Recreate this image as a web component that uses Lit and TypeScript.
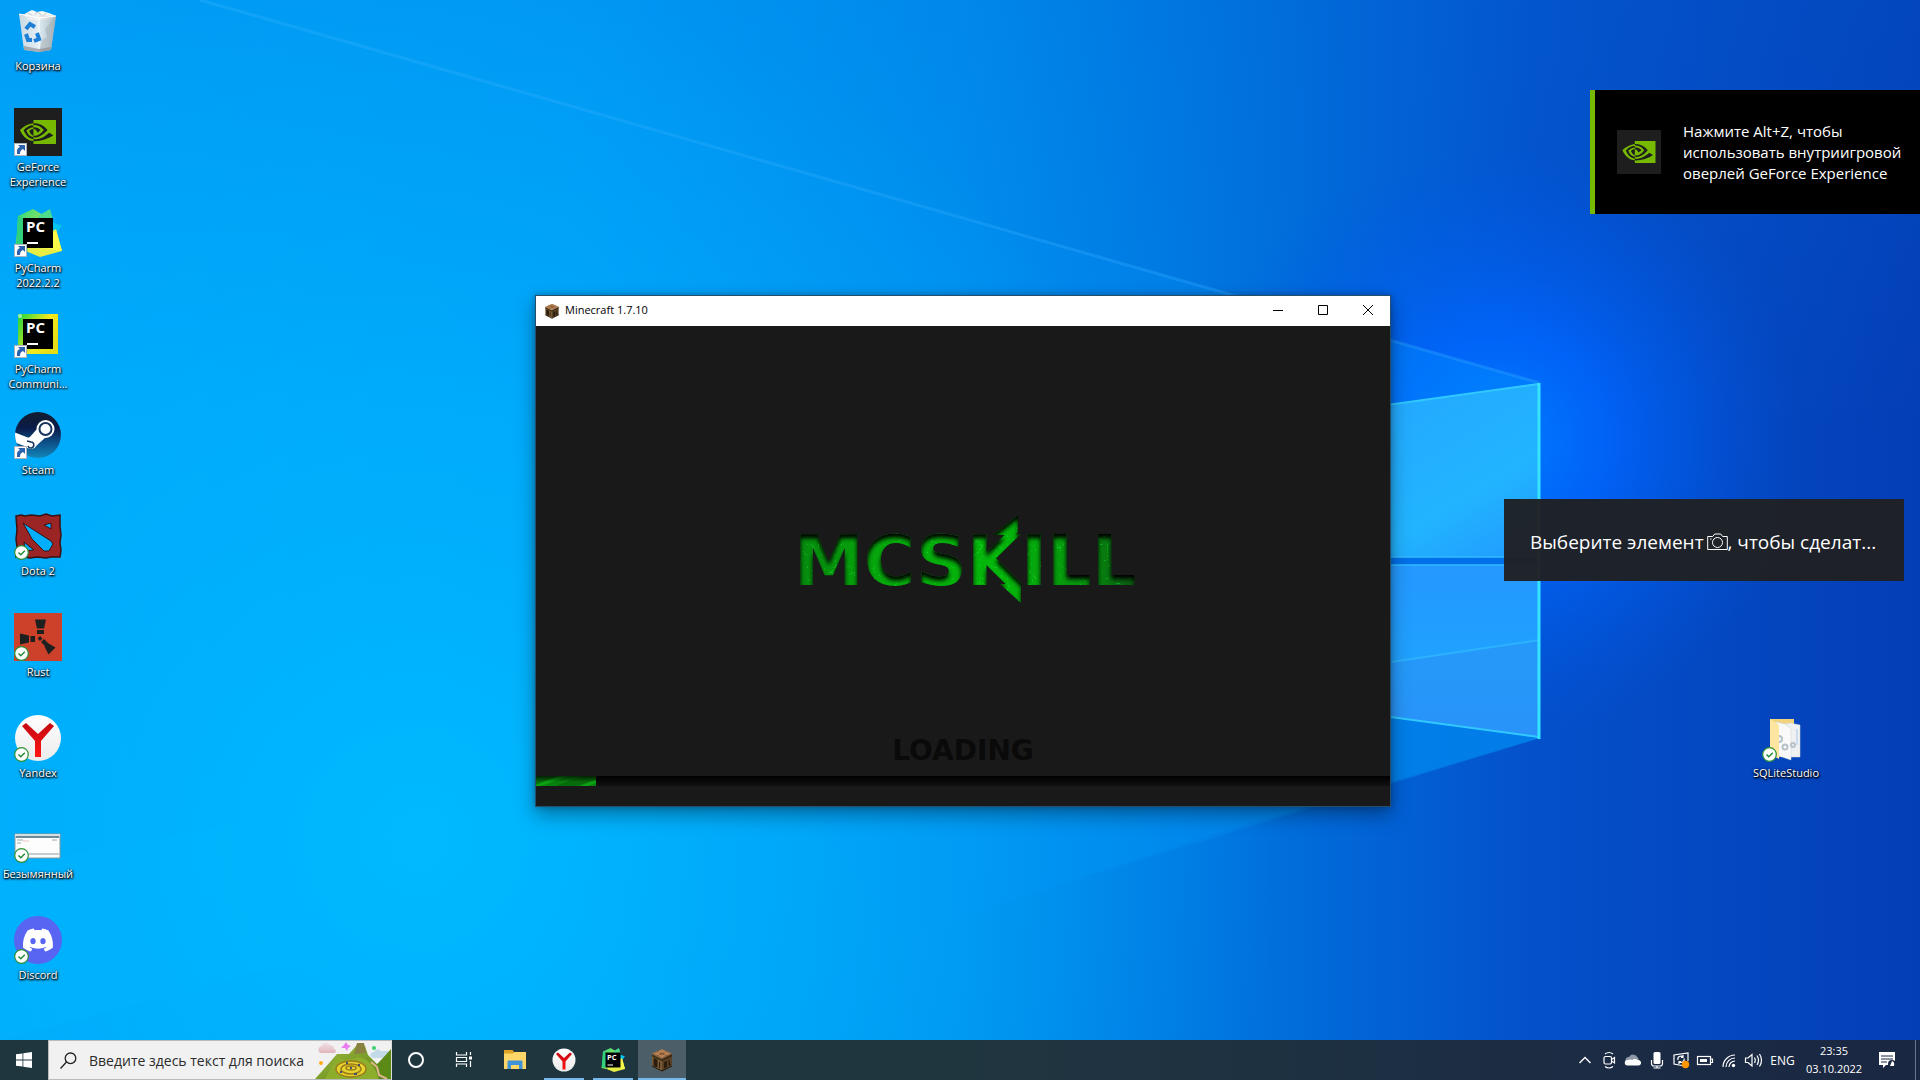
import { LitElement, html, css, svg } from "lit";
import { customElement } from "lit/decorators.js";

const NVIDIA =
  "M8.948 8.798v-1.43a6.7 6.7 0 0 1 .424-.018c3.922-.124 6.493 3.374 6.493 3.374s-2.774 3.851-5.75 3.851c-.398 0-.787-.062-1.158-.185v-4.346c1.528.185 1.837.857 2.747 2.385l2.04-1.714s-1.492-1.952-4-1.952a6.016 6.016 0 0 0-.796.035m0-4.735v2.138l.424-.027c5.45-.185 9.01 4.47 9.01 4.47s-4.08 4.964-8.33 4.964c-.37 0-.733-.035-1.095-.097v1.325c.3.035.61.062.91.062 3.957 0 6.82-2.023 9.593-4.408.459.371 2.34 1.263 2.73 1.652-2.633 2.208-8.772 3.984-12.253 3.984-.335 0-.653-.018-.971-.053v1.864H24V4.063zm0 10.326v1.131c-3.657-.654-4.673-4.46-4.673-4.46s1.758-1.944 4.673-2.262v1.237H8.94c-1.528-.186-2.73 1.245-2.73 1.245s.68 2.412 2.739 3.11M2.456 10.9s2.164-3.197 6.5-3.533V6.201C4.153 6.59 0 10.653 0 10.653s2.35 6.802 8.948 7.42v-1.237c-4.84-.6-6.492-5.936-6.492-5.936z";
const DISCORD =
  "M20.317 4.3698a19.7913 19.7913 0 00-4.8851-1.5152.0741.0741 0 00-.0785.0371c-.211.3753-.4447.8648-.6083 1.2495-1.8447-.2762-3.68-.2762-5.4868 0-.1636-.3933-.4058-.8742-.6177-1.2495a.077.077 0 00-.0785-.037 19.7363 19.7363 0 00-4.8852 1.515.0699.0699 0 00-.0321.0277C.5334 9.0458-.319 13.5799.0992 18.0578a.0824.0824 0 00.0312.0561c2.0528 1.5076 4.0413 2.4228 5.9929 3.0294a.0777.0777 0 00.0842-.0276c.4616-.6304.8731-1.2952 1.226-1.9942a.076.076 0 00-.0416-.1057c-.6528-.2476-1.2743-.5495-1.8722-.8923a.077.077 0 01-.0076-.1277c.1258-.0943.2517-.1923.3718-.2914a.0743.0743 0 01.0776-.0105c3.9278 1.7933 8.18 1.7933 12.0614 0a.0739.0739 0 01.0785.0095c.1202.099.246.1981.3728.2924a.077.077 0 01-.0066.1276 12.2986 12.2986 0 01-1.873.8914.0766.0766 0 00-.0407.1067c.3604.698.7719 1.3628 1.225 1.9932a.076.076 0 00.0842.0286c1.961-.6067 3.9495-1.5219 6.0023-3.0294a.077.077 0 00.0313-.0552c.5004-5.177-.8382-9.6739-3.5485-13.6604a.061.061 0 00-.0312-.0286zM8.02 15.3312c-1.1825 0-2.1569-1.0857-2.1569-2.419 0-1.3332.9555-2.4189 2.157-2.4189 1.2108 0 2.1757 1.0952 2.1568 2.419 0 1.3332-.9555 2.4189-2.1569 2.4189zm7.9748 0c-1.1825 0-2.1569-1.0857-2.1569-2.419 0-1.3332.9554-2.4189 2.1569-2.4189 1.2108 0 2.1757 1.0952 2.1568 2.419 0 1.3332-.946 2.4189-2.1568 2.4189Z";

/* ---- artwork, drawn in a 48 x 48 box ---- */

const nvidia = svg`
  <rect width="48" height="48" fill="#1e1e1e"/>
  <path transform="translate(6 6) scale(1.5)" fill="#76b900" d=${NVIDIA}/>`;

const recycleBin = svg`
  <defs>
    <linearGradient id="bin" x1="0" x2="1">
      <stop offset="0" stop-color="#d9dde0"/><stop offset=".5" stop-color="#f1f3f4"/><stop offset="1" stop-color="#b9bec2"/>
    </linearGradient>
  </defs>
  <path d="M9 8l5-3 4-2 5 2 5-1 7 2 7 3-8 4H14z" fill="#f7f8f8"/>
  <path d="M14 6l6 3 3-4 6 4 4-4" fill="none" stroke="#bcc5cb" stroke-width="1"/>
  <path d="M5 7l37 2-5 34-12 2-15-2z" fill="url(#bin)" opacity=".93"/>
  <path d="M5 7l20 4 17-2M25 11v34" fill="none" stroke="#fff" stroke-width="1"/>
  <path d="M42 9l-5 34-12 2 3-12 5-3-2-8z" fill="#9ba3a8" opacity=".4"/>
  <path d="M10 39l15 3 12-2v3l-12 2-15-2z" fill="#8f9295" opacity=".7"/>
  <g fill="none" stroke="#1d7fd6" stroke-width="4">
    <path d="M12 22l4-5 5 3"/><path d="M12 27l2 6 4 0"/><path d="M20 34l5-2-2-6"/>
  </g>`;

const pycharmTile = svg`
  <rect x="9" y="9" width="30" height="30" fill="#000"/>
  <text x="12" y="23" font-family="Open Sans, sans-serif" font-size="15" font-weight="700" fill="#fff">PC</text>
  <rect x="13" y="33" width="11" height="2" fill="#fff"/>`;

const pycharm = svg`
  <defs>
    <linearGradient id="pc1" x1="0" y1="0" x2="1" y2="1">
      <stop offset="0" stop-color="#21d789"/><stop offset=".6" stop-color="#8be35c"/><stop offset="1" stop-color="#fcf84a"/>
    </linearGradient>
  </defs>
  <path d="M4 7L19 0l10 6L20 44 1 40 3 24z" fill="url(#pc1)"/>
  <path d="M4 7l12 5-8 28-6-2z" fill="#2fd17c"/>
  <path d="M24 7L36 0l3 11-8 10z" fill="#4cdc8b"/>
  <path d="M36 12l12 5-10 12z" fill="#07c3f2"/>
  <path d="M14 36l28-16 6 22-22 6-12-5z" fill="#e6ee45"/>
  <path d="M42 21l6 21-20-3z" fill="#fcf84a"/>
  ${pycharmTile}`;

const pycharmCommunity = svg`
  <defs>
    <linearGradient id="pcc" x1="0" y1="0" x2="1" y2="0.5">
      <stop offset="0" stop-color="#17d53c"/><stop offset=".35" stop-color="#8fe02f"/><stop offset=".65" stop-color="#f5ea1e"/><stop offset="1" stop-color="#e8dc16"/>
    </linearGradient>
  </defs>
  <rect x="4" y="4" width="40" height="40" fill="url(#pcc)"/>
  <circle cx="6" cy="6" r="2" fill="#d6fbe6" opacity=".7"/>
  ${pycharmTile}`;

const steam = svg`
  <defs>
    <linearGradient id="st" x1="0" y1="0" x2="0" y2="1">
      <stop offset="0" stop-color="#111d2e"/><stop offset=".35" stop-color="#0a1b48"/><stop offset=".7" stop-color="#0d568e"/><stop offset="1" stop-color="#1387b8"/>
    </linearGradient>
    <clipPath id="stc"><circle cx="24" cy="24" r="23"/></clipPath>
  </defs>
  <circle cx="24" cy="24" r="23" fill="url(#st)"/>
  <g clip-path="url(#stc)">
    <path d="M0 21l15 6 8-9 9 8-10 9-6 2L0 31z" fill="#fff"/>
    <circle cx="31.500" cy="18" r="9" fill="#fff"/>
    <circle cx="31.500" cy="18" r="6" fill="none" stroke="#17325c" stroke-width="2"/>
    <circle cx="17" cy="32" r="6" fill="#fff"/>
    <path d="M13 30l4 1a3 3 0 1 1-3 4" fill="none" stroke="#17325c" stroke-width="1.500"/>
  </g>`;

const dota = svg`
  <path d="M2 4l5-1 4 1 6-1 9 1 6-2 6 2 8-1v11l1 9-1 8 1 7-1 7-9 0-5 1-9-1-7 1-6-1-8 0 1-10-1-8 1-9z" fill="#9b2424" stroke="#3a1010" stroke-width="1.500"/>
  <path d="M9 11l28 18 2 3-4 7-5 0-12-12z" fill="#00b0ff" stroke="#3a1010" stroke-width="1"/>
  <path d="M30 13l7-2v6zM10 30l10 8-9 1z" fill="#00b0ff" stroke="#3a1010" stroke-width="1"/>`;

const rust = svg`
  <rect width="48" height="48" fill="#cd412b"/>
  <g fill="#1e2020">
    <path d="M21 6.500h11l-2 9h-7zM23 17h7v4h-7z"/>
    <path d="M6 20.500l9 2v7l-9 2zM16.500 23H21v6h-4.500z"/>
    <path d="M33 29.500l8.500 5-7 7-4-8zM27 29l3-3 4 4-3 3z"/>
    <path d="M26 23l2.500 2.500L26 28l-2.500-2.500z"/>
  </g>`;

const yandex = svg`
  <defs>
    <linearGradient id="ya" x1="0" y1="0" x2="0" y2="1"><stop offset="0" stop-color="#fff"/><stop offset="1" stop-color="#ebebeb"/></linearGradient>
    <linearGradient id="yr" x1="0" y1="0" x2="0" y2="1"><stop offset="0" stop-color="#c40a12"/><stop offset="1" stop-color="#ff1414"/></linearGradient>
  </defs>
  <circle cx="24" cy="24" r="23" fill="url(#ya)"/>
  <path d="M8 12l4-3 12 11L36 9l4 3-13 15v16h-6V27z" fill="url(#yr)"/>`;

const screenshotFile = svg`
  <rect x="1" y="19" width="45" height="24" fill="#fdfdfd" stroke="#87979e" stroke-width="1"/>
  <rect x="1" y="19" width="45" height="2" fill="#d8dfe2"/>
  <rect x="2" y="21" width="43" height="2" fill="#6d8c99"/>
  <path d="M3 25h6M3 28h4M38 25h5" stroke="#99a8b0"/>
  <path d="M9 26h6" stroke="#eec4c4"/>
  <rect x="15" y="38" width="30" height="2" fill="#c3ccd0"/>`;

const discord = svg`
  <circle cx="24" cy="24" r="24" fill="#5865f2"/>
  <path transform="translate(9 9) scale(1.25)" fill="#fff" d=${DISCORD}/>`;

const folder = svg`
  <path d="M8 5h24v38H8z" fill="#f3d47e"/>
  <path d="M19 11l9-2 10 2v32l-14 0z" fill="#eef0f1" stroke="#d3d7da" stroke-width=".5"/>
  <path d="M14 8l9 2 6 5v31l-12-4z" fill="#fafafa" stroke="#cfd3d6" stroke-width=".5"/>
  <path d="M8 5l9 6v34l-9-5z" fill="#ffe6a0"/>
  <g fill="none" stroke="#b6c1ca" stroke-width="2">
    <path d="M17 22a3 3 0 0 1 0 6"/><circle cx="23" cy="33" r="2.500"/><circle cx="31" cy="31" r="2"/>
  </g>
  <path d="M35 15v16" stroke="#a9c8ee"/>`;

const craftingTable = svg`
  <path d="M24 2l20 9-20 10L4 11z" fill="#a9764c"/>
  <path d="M4 11l20 10v25L4 36z" fill="#7a5a35"/>
  <path d="M44 11L24 21v25l20-10z" fill="#5b4226"/>
  <path d="M14 7l20 9M34 7l-20 9" stroke="#7d4f2c" stroke-width="2"/>
  <path d="M24 6l11 5-11 6-11-6z" fill="none" stroke="#c48d5e" stroke-width="2"/>
  <path d="M4 15l20 10 20-10" fill="none" stroke="#3d2a14" stroke-width="3"/>
  <path d="M8 21v14l6 3V24zM19 28v12M29 28v12l4-2V26M38 23v12l3-2" fill="#2a1c0e" stroke="#2a1c0e" stroke-width="2"/>
  <path d="M4 36l20 10 20-10" fill="none" stroke="#20150a" stroke-width="2"/>`;

const explorer = svg`
  <path d="M2 4h17l3 4h24v34H2z" fill="#e0a526"/>
  <path d="M2 11h18l4-3h22v34H2z" fill="#ffd768"/>
  <path d="M9 42V27q0-2 2-2h26q2 0 2 2v15h-7v-8H16v8z" fill="#3f93d6"/>
  <path d="M16 34h16v8H16z" fill="#ffd768"/>`;

const shortcutBadge = svg`
  <rect x=".5" y="35.500" width="12" height="12" fill="#fff" stroke="#a8b3bd" stroke-width="1"/>
  <path d="M3 46c0-4 0-6 3-7l-2-2h7v6l-2-2c-2 1-3 2-3 5z" fill="#2b62ae"/>`;

const syncBadge = svg`
  <circle cx="7.500" cy="40.500" r="6.800" fill="#fff" stroke="#2c9137" stroke-width="1.200"/>
  <path d="M4.500 40.500l2.300 2.300 4-4" fill="none" stroke="#1f8a34" stroke-width="1.400"/>`;

type Item = { label: string; art: unknown; badge?: unknown };
const desktopItems: Item[] = [
  { label: "Корзина", art: recycleBin },
  { label: "GeForce Experience", art: nvidia, badge: shortcutBadge },
  { label: "PyCharm 2022.2.2", art: pycharm, badge: shortcutBadge },
  { label: "PyCharm Communi...", art: pycharmCommunity, badge: shortcutBadge },
  { label: "Steam", art: steam, badge: shortcutBadge },
  { label: "Dota 2", art: dota, badge: syncBadge },
  { label: "Rust", art: rust, badge: syncBadge },
  { label: "Yandex", art: yandex, badge: syncBadge },
  { label: "Безымянный", art: screenshotFile, badge: syncBadge },
  { label: "Discord", art: discord, badge: syncBadge },
];

const taskApps = [
  { label: "Проводник", art: explorer, state: "" },
  { label: "Yandex", art: yandex, state: "running" },
  { label: "PyCharm", art: pycharm, state: "running" },
  { label: "Minecraft 1.7.10", art: craftingTable, state: "active" },
];

/* Tray glyphs, 20 x 20 */
const tray = [
  { label: "Скрытые значки", art: svg`<path d="M4.500 13L10 7.500l5.500 5.500" stroke-width="1.400"/>` },
  {
    label: "Начать собрание",
    art: svg`<rect x="5" y="6.500" width="7.500" height="7.500" rx="1.500"/><path d="M12.500 9.500l3-2v5.500l-3-2M6 4q4-3 8 0M6 16.500q4 3 8 0"/>`,
  },
  {
    label: "OneDrive",
    art: svg`<path d="M5 13a3 3 0 0 1 1-6 5 5 0 0 1 9 1l2 4z" fill="#8d97a5" stroke="none"/><path d="M4.500 15.500a2.500 2.500 0 0 1 0-5.500q3-1 5 0 2-2.500 5 0 4 0 3.500 3.500-.5 2-2.500 2z" fill="#fff" stroke="none"/>`,
  },
  {
    label: "Микрофон",
    art: svg`<rect x="6.500" y="2" width="7" height="12" rx="1.500" fill="#fff" stroke="none"/><path d="M4.500 10v3.500q0 2.500 2.500 2.500h6q2.500 0 2.500-2.500V10M10 16v2.500M6.500 18h7"/>`,
  },
  {
    label: "Обновление",
    art: svg`<path d="M11 15.500L3 14V5l14-2v8" /><path d="M7 10a3 3 0 0 1 5-3M13 8.500a3 3 0 0 1-5 3M12 5v2.500h-2M8 14v-2.500h2"/><circle cx="14.500" cy="14.500" r="3.700" fill="#ff9500" stroke="none"/>`,
  },
  {
    label: "Батарея",
    art: svg`<rect x="2.500" y="6.500" width="13" height="8"/><path d="M15.500 9h2v3.500h-2"/><rect x="5" y="9" width="7" height="3" fill="#fff" stroke="none"/>`,
  },
  {
    label: "Сеть",
    art: svg`<path d="M4 17A12 12 0 0 1 16 5M7 17a9 9 0 0 1 9-9M10 17a6 6 0 0 1 6-6"/><circle cx="14.500" cy="15.500" r="1.700" fill="#fff" stroke="none"/>`,
  },
  {
    label: "Громкость",
    art: svg`<path d="M2.500 8v4.500H5l4 3.500V4.500L5 8z"/><path d="M11.500 7.500q1.500 2.700 0 5.500M14 5.500q3 4.700 0 9.500M16.500 4q4 6.200 0 12.500"/>`,
  },
];

const wallpaper = html`
  <svg class="wallpaper" viewBox="0 0 1920 1080" preserveAspectRatio="none" aria-hidden="true">
    <defs>
      <linearGradient id="base" x1="0" y1="0" x2="1" y2="0">
        <stop offset="0" stop-color="#00abfc"/><stop offset=".3" stop-color="#00a4fa"/>
        <stop offset=".5" stop-color="#0090ee"/><stop offset=".65" stop-color="#0072de"/>
        <stop offset=".8" stop-color="#0450cb"/><stop offset="1" stop-color="#043eb6"/>
      </linearGradient>
      <linearGradient id="top" x1="0" y1="0" x2="0" y2="1">
        <stop offset="0" stop-color="#0068d8" stop-opacity=".2"/><stop offset=".4" stop-color="#0070e0" stop-opacity="0"/>
      </linearGradient>
      <radialGradient id="cyan" cx="420" cy="840" r="860" gradientUnits="userSpaceOnUse">
        <stop offset="0" stop-color="#00bcff" stop-opacity=".9"/><stop offset=".5" stop-color="#00b2fc" stop-opacity=".5"/>
        <stop offset="1" stop-color="#00a8f4" stop-opacity="0"/>
      </radialGradient>
      <radialGradient id="glow" cx="1500" cy="440" r="300" gradientUnits="userSpaceOnUse">
        <stop offset="0" stop-color="#007cff"/><stop offset=".35" stop-color="#0066ff" stop-opacity=".85"/>
        <stop offset="1" stop-color="#0056e0" stop-opacity="0"/>
      </radialGradient>
      <linearGradient id="beam" x1="200" y1="0" x2="1540" y2="0" gradientUnits="userSpaceOnUse">
        <stop offset="0" stop-color="#00a0ff" stop-opacity="0"/><stop offset=".6" stop-color="#0098ff" stop-opacity=".35"/>
        <stop offset="1" stop-color="#0098ff" stop-opacity=".9"/>
      </linearGradient>
      <linearGradient id="edge" x1="200" y1="0" x2="1540" y2="0" gradientUnits="userSpaceOnUse">
        <stop offset="0" stop-color="#35b5ff" stop-opacity=".3"/><stop offset="1" stop-color="#2ba0ff" stop-opacity=".4"/>
      </linearGradient>
      <linearGradient id="low" x1="900" y1="0" x2="1540" y2="0" gradientUnits="userSpaceOnUse">
        <stop offset="0" stop-color="#00a0f6" stop-opacity="0"/><stop offset="1" stop-color="#0088f0" stop-opacity=".6"/>
      </linearGradient>
      <linearGradient id="pane" x1="0" y1="0" x2="1" y2="1">
        <stop offset="0" stop-color="#24a2ff"/><stop offset=".7" stop-color="#22b4ff"/><stop offset="1" stop-color="#2099ff"/>
      </linearGradient>
      <linearGradient id="pane2" x1="0" y1="0" x2="0" y2="1">
        <stop offset="0" stop-color="#2498ff"/><stop offset=".6" stop-color="#1fa2ff"/><stop offset="1" stop-color="#2896ff"/>
      </linearGradient>
    </defs>
    <rect width="1920" height="1080" fill="url(#base)"/>
    <rect width="1920" height="1080" fill="url(#top)"/>
    <rect width="1920" height="1080" fill="url(#cyan)"/>
    <rect width="1920" height="1080" fill="url(#glow)"/>
    <path d="M200 0L1540 383V738L1200 838 900 938 600 500z" fill="url(#beam)" opacity=".4"/>
    <path d="M1540 738L1180 848 900 934 900 560z" fill="url(#low)"/>
    <path d="M200 0L1540 383" stroke="url(#edge)" stroke-width="3"/>
    <path d="M0 868L535 768 535 900 0 1040z" fill="#00b8ff" opacity=".2"/>
    <path d="M1250 424L1540 383V557H1250z" fill="url(#pane)"/>
    <path d="M1250 565H1540V738L1250 698z" fill="url(#pane2)"/>
    <path d="M1250 683L1540 640V738L1250 698z" fill="#2c8ff2" opacity=".45"/>
    <path d="M1250 683L1540 640M1250 557H1540M1250 565H1540" stroke="#2fb8ff" stroke-width="2" opacity=".8"/>
    <rect x="1250" y="558" width="290" height="6" fill="#0070ea"/>
    <path d="M1250 424L1539 384M1250 698L1539 737" stroke="#30c8ff" stroke-width="2" fill="none"/>
    <path d="M1539 383V739" stroke="#36e4ff" stroke-width="3"/>
  </svg>
`;

@customElement("app-root")
export class AppRoot extends LitElement {
  static styles = css`
    :host {
      display: block;
      font-family: "Open Sans", "Noto Sans", sans-serif;
      color: #fff;
    }
    button {
      border: 0;
      padding: 0;
      background: none;
      color: inherit;
      font: inherit;
    }
    .screen {
      position: relative;
      display: flex;
      flex-direction: column;
      min-height: 100vh;
      overflow: hidden;
      background: #0078d7;
    }
    .wallpaper {
      position: absolute;
      inset: 0;
      width: 100%;
      height: 100%;
    }
    .desktop {
      position: relative;
      flex: 1;
    }
    .icons {
      display: flex;
      flex-direction: column;
      align-items: flex-start;
      list-style: none;
      margin: 0;
      padding: 7px 0 0;
    }
    .icons li {
      height: 101px;
    }
    .item {
      display: flex;
      flex-direction: column;
      align-items: center;
      gap: 3px;
      width: 76px;
      font-size: 11px;
      line-height: 15px;
      text-shadow: 1px 1px 2px #000, 0 1px 2px #000, 0 0 3px rgba(0, 0, 0, 0.6);
    }
    .item svg {
      width: 48px;
      height: 48px;
      overflow: visible;
    }
    .loose {
      position: absolute;
      right: 96px;
      top: 714px;
    }

    /* game window */
    .window {
      position: absolute;
      left: 535px;
      top: 295px;
      width: 856px;
      box-sizing: border-box;
      border: 1px solid #24506e;
      background: #191919;
      box-shadow: 0 8px 18px rgba(0, 0, 0, 0.35), 0 0 6px rgba(0, 0, 0, 0.25);
    }
    .titlebar {
      display: flex;
      align-items: center;
      height: 30px;
      padding-left: 8px;
      background: #fff;
      color: #000;
      font-size: 11px;
      line-height: 28px;
    }
    .titlebar svg.app {
      width: 16px;
      height: 16px;
      margin-right: 5px;
    }
    .title {
      flex: 1;
      align-self: flex-start;
      margin: 0;
      font-size: inherit;
      font-weight: 400;
    }
    .winbtn {
      display: grid;
      place-items: center;
      width: 45px;
      height: 28px;
      align-self: flex-start;
    }
    .winbtn svg {
      width: 10px;
      height: 10px;
      fill: none;
      stroke: #000;
    }
    .client {
      display: flex;
      flex-direction: column;
      align-items: center;
      padding: 186px 0 20px;
    }
    .brand {
      width: 344px;
      height: 100px;
      margin-left: 12px;
      overflow: visible;
    }
    .brand text {
      font: 700 70px "DejaVu Sans", sans-serif;
    }
    .loading {
      margin: 121px 0 7px;
      font: 700 28px/36px "DejaVu Sans", sans-serif;
      color: #0a0a0a;
    }
    .progress {
      appearance: none;
      display: block;
      width: 100%;
      height: 10px;
      border: 0;
      background: none;
    }
    .progress::-webkit-progress-bar {
      background: linear-gradient(#000, #111);
    }
    .progress::-webkit-progress-value {
      background: linear-gradient(rgba(0, 0, 0, 0.7), transparent 60%),
        repeating-linear-gradient(160deg, #066c0b 0 7px, #0ca414 9px 10px, #08800e 12px 16px);
    }

    /* notifications */
    .toast-nvidia {
      position: absolute;
      right: 0;
      top: 90px;
      display: flex;
      align-items: center;
      gap: 22px;
      width: 330px;
      height: 124px;
      box-sizing: border-box;
      padding-left: 22px;
      border-left: 5px solid #76b900;
      background: #000;
      font-size: 15px;
      line-height: 21px;
    }
    .toast-nvidia svg {
      flex: none;
      width: 44px;
      height: 44px;
    }
    .toast-nvidia p,
    .toast-shot p {
      margin: 0;
      white-space: nowrap;
    }
    .toast-shot {
      position: absolute;
      right: 16px;
      top: 499px;
      display: flex;
      align-items: center;
      width: 400px;
      height: 82px;
      box-sizing: border-box;
      padding: 4px 26px 0;
      background: rgba(31, 32, 34, 0.96);
      font-size: 19px;
      line-height: 26px;
    }
    .toast-shot svg {
      width: 21px;
      height: 17px;
      margin-left: -2px;
      fill: none;
      stroke: #fff;
      vertical-align: -1px;
    }

    /* taskbar */
    .taskbar {
      position: relative;
      display: flex;
      height: 40px;
      background: linear-gradient(90deg, #20363f, #20363f 50%, #1b2b44 85%, #1a2742);
    }
    .start,
    .taskbtn {
      display: grid;
      place-items: center;
      width: 48px;
      height: 40px;
    }
    .start svg {
      width: 16px;
      height: 16px;
    }
    .search {
      position: relative;
      display: flex;
      align-items: center;
      gap: 12px;
      width: 344px;
      height: 40px;
      box-sizing: border-box;
      padding-left: 11px;
      border: 1px solid #b8bbbd;
      border-right-color: #ddd;
      background: #f1f1f1;
    }
    .search .lens {
      flex: none;
      width: 17px;
      height: 17px;
    }
    .search input {
      flex: 1;
      min-width: 0;
      border: 0;
      padding: 0;
      outline: 0;
      background: none;
      font: 14px "Open Sans", "Noto Sans", sans-serif;
      color: #2b2b2b;
    }
    .search input::placeholder {
      color: #2b2b2b;
      opacity: 1;
    }
    .search .scene {
      flex: none;
      width: 76px;
      height: 38px;
      margin-left: -8px;
    }
    .tools,
    .apps,
    .tray {
      display: flex;
    }
    .taskbtn svg {
      width: 24px;
      height: 24px;
      fill: none;
    }
    .apps {
      gap: 1px;
      margin-left: 3px;
    }
    .apps .taskbtn {
      position: relative;
    }
    .running::after,
    .active::after {
      content: "";
      position: absolute;
      left: 4px;
      right: 4px;
      bottom: 0;
      height: 2px;
      background: #76b9ed;
    }
    .active::after {
      left: 0;
      right: 0;
    }
    .active {
      background: #4c5e68;
    }
    .tray {
      align-items: stretch;
      margin-left: auto;
      font-size: 12px;
    }
    .traybtn {
      display: grid;
      place-items: center;
      width: 24px;
    }
    .traybtn svg {
      width: 20px;
      height: 20px;
      fill: none;
      stroke: #fff;
      stroke-width: 1.200;
    }
    .lang {
      width: 35px;
    }
    .clock {
      display: flex;
      flex-direction: column;
      justify-content: center;
      align-items: center;
      width: 68px;
      font-size: 11px;
      line-height: 18px;
    }
    .notes {
      display: grid;
      place-items: center;
      width: 38px;
    }
    .notes svg {
      width: 18px;
      height: 18px;
    }
    .peek {
      width: 5px;
      margin-left: 9px;
      border-left: 1px solid #69748a;
    }
  `;

  private item(i: Item) {
    return html`<button class="item">
      <svg viewBox="0 0 48 48" aria-hidden="true">${i.art}${i.badge}</svg>
      <span>${i.label}</span>
    </button>`;
  }

  private gameWindow() {
    return html`<section class="window" aria-label="Minecraft 1.7.10">
      <header class="titlebar">
        <svg class="app" viewBox="0 0 48 48" aria-hidden="true">${craftingTable}</svg>
        <h1 class="title">Minecraft 1.7.10</h1>
        <button class="winbtn" aria-label="Свернуть"><svg viewBox="0 0 10 10"><path d="M0 5.500h10"/></svg></button>
        <button class="winbtn" aria-label="Развернуть"><svg viewBox="0 0 10 10"><path d="M.5.5h9v9h-9z"/></svg></button>
        <button class="winbtn" aria-label="Закрыть"><svg viewBox="0 0 10 10"><path d="M0 0l10 10M10 0L0 10"/></svg></button>
      </header>
      <div class="client">
        <svg class="brand" viewBox="0 0 344 100">
          <defs>
            <linearGradient id="mc" gradientUnits="userSpaceOnUse" x1="0" y1="0" x2="340" y2="0">
              <stop offset="0" stop-color="#078a0e"/><stop offset=".25" stop-color="#06a80c"/>
              <stop offset=".6" stop-color="#05b80b"/><stop offset=".85" stop-color="#07900e"/><stop offset="1" stop-color="#0a5512"/>
            </linearGradient>
            <filter id="veins" x="-5%" y="-5%" width="110%" height="110%" color-interpolation-filters="sRGB">
              <feTurbulence type="turbulence" baseFrequency=".09" numOctaves="3" seed="4" result="n"/>
              <feColorMatrix in="n" type="matrix" values="0 0 0 0 .1  0 0 0 0 .9  0 0 0 0 .2  -7 0 0 0 .8" result="v"/>
              <feComposite in="v" in2="SourceAlpha" operator="in" result="lines"/>
              <feOffset in="SourceAlpha" dy="4"/>
              <feGaussianBlur stdDeviation="2" result="o"/>
              <feComposite in="SourceAlpha" in2="o" operator="out" result="shade"/>
              <feMerge><feMergeNode in="SourceGraphic"/><feMergeNode in="lines"/><feMergeNode in="shade"/></feMerge>
            </filter>
          </defs>
          <g filter="url(#veins)" fill="url(#mc)">
            <text x="-3" y="73">MCSKILL</text>
            <path class="blades" d="M196 23L221 3V20L218 23zM203 72H224V91z"/>
          </g>
        </svg>
        <p class="loading">LOADING</p>
        <progress class="progress" max="100" value="7" aria-label="LOADING"></progress>
      </div>
    </section>`;
  }

  private taskbar() {
    return html`<footer class="taskbar">
      <button class="start" aria-label="Пуск">
        <svg viewBox="0 0 16 16" fill="#fff"><path d="M0 2.300L6.500 1.400v6.200H0zM7.300 1.300L16 0v7.600H7.300zM0 8.400h6.500v6.200L0 13.700zM7.300 8.400H16V16l-8.700-1.300z"/></svg>
      </button>
      <label class="search">
        <svg class="lens" viewBox="0 0 17 17" fill="none" stroke="#222" stroke-width="1.300"><circle cx="10.500" cy="6.300" r="5.300"/><path d="M6.500 10L.5 16.500"/></svg>
        <input type="text" aria-label="Поиск" placeholder="Введите здесь текст для поиска" />
        <svg class="scene" viewBox="0 0 76 38" aria-hidden="true">
          <defs>
            <linearGradient id="hill" x1="0" y1="0" x2="1" y2="1"><stop offset="0" stop-color="#a6bd42"/><stop offset="1" stop-color="#4f7d10"/></linearGradient>
            <linearGradient id="cld" x1="0" y1="0" x2="0" y2="1"><stop offset="0" stop-color="#efe3e6"/><stop offset="1" stop-color="#e3b4bd"/></linearGradient>
          </defs>
          <path d="M5 12a4 4 0 0 1 1-7 5 5 0 0 1 9-1 4 4 0 0 1 4 4 2 2 0 0 1 0 4z" fill="url(#cld)"/>
          <path d="M58 17a3 3 0 0 1 1-6 4 4 0 0 1 7-1h10v7z" fill="#c3dbe8"/>
          <path d="M31 1l2 3 3 1-3 2-1 3-2-3-4 0 3-3z" fill="#e97df0"/>
          <circle cx="59" cy="7" r="2" fill="#3fcf74"/><circle cx="6" cy="22" r="2" fill="#ffab1a"/>
          <path d="M0 38l8-9 14-16 12 0 8-9 8 1 3 9 9 9 14-14v31z" fill="url(#hill)"/>
          <path d="M42 2l7 0 2 10-12 1z" fill="#8a8040"/>
          <path d="M76 8l-14 16 8 14h6z" fill="#5b8a16"/>
          <path d="M22 16q14 5 20 0 10 0 18 12l4 10H10z" fill="#8cae2c"/>
          <path d="M56 21l6 5 2 8 8 4" fill="none" stroke="#e0b68e" stroke-width="2"/>
          <g fill="#e5d32e" stroke="#9c7a1a" stroke-width="1.500">
            <ellipse cx="36" cy="28" rx="15" ry="8"/><ellipse cx="36" cy="28" rx="10" ry="5"/><ellipse cx="36" cy="27" rx="5" ry="2"/>
          </g>
          <path d="M25 31h2M39 33h3M43 24h2M31 22h2M35 27h2" stroke="#45506c" stroke-width="2"/>
        </svg>
      </label>
      <nav class="tools">
        <button class="taskbtn" aria-label="Кортана">
          <svg viewBox="0 0 24 24"><circle cx="12" cy="12" r="7" stroke="#fff" stroke-width="2"/></svg>
        </button>
        <button class="taskbtn" aria-label="Представление задач">
          <svg viewBox="0 0 24 24" stroke="#fff" stroke-width="1.200"><path d="M4.500 4v3h10V4M4.500 19v-3h10v3M4.500 9.500h10v4h-10zM18.500 4v3M18.500 13v6"/><path d="M17 8.500h3v3h-3z" fill="#fff" stroke="none"/></svg>
        </button>
      </nav>
      <nav class="apps">
        ${taskApps.map(
          (a) => html`<button class="taskbtn ${a.state}" aria-label=${a.label}><svg viewBox="0 0 48 48">${a.art}</svg></button>`,
        )}
      </nav>
      <div class="tray">
        ${tray.map(
          (t) => html`<button class="traybtn" aria-label=${t.label}><svg viewBox="0 0 20 20">${t.art}</svg></button>`,
        )}
        <button class="lang">ENG</button>
        <button class="clock"><span>23:35</span><span>03.10.2022</span></button>
        <button class="notes" aria-label="Уведомления">
          <svg viewBox="0 0 18 18"><path d="M1 1h16v13h-9l-3 3v-3H1z" fill="#fff"/><path d="M3 5h12M3 8h12M3 11h6" stroke="#1a2742"/><circle cx="14" cy="13" r="4" fill="#1a2742"/><path d="M12 15l2-5q3 1 2 5z" fill="#fff"/></svg>
        </button>
        <button class="peek" aria-label="Свернуть все окна"></button>
      </div>
    </footer>`;
  }

  render() {
    return html`<div class="screen">
      ${wallpaper}
      <main class="desktop">
        <ul class="icons">
          ${desktopItems.map((i) => html`<li>${this.item(i)}</li>`)}
        </ul>
        <div class="loose">${this.item({ label: "SQLiteStudio", art: folder, badge: syncBadge })}</div>
        ${this.gameWindow()}
        <aside class="toast-nvidia">
          <svg viewBox="0 0 48 48" aria-hidden="true">${nvidia}</svg>
          <p>Нажмите Alt+Z, чтобы<br />использовать внутриигровой<br />оверлей GeForce Experience</p>
        </aside>
        <aside class="toast-shot">
          <p>Выберите элемент <svg viewBox="0 0 21 17" aria-label="камера"><path d="M.700 3.500h5l2-2.500h6l2 2.500h4.600v13H.700z"/><circle cx="10.500" cy="9.500" r="5"/><path d="M3 6h1.500"/></svg>, чтобы сделат...</p>
        </aside>
      </main>
      ${this.taskbar()}
    </div>`;
  }
}
